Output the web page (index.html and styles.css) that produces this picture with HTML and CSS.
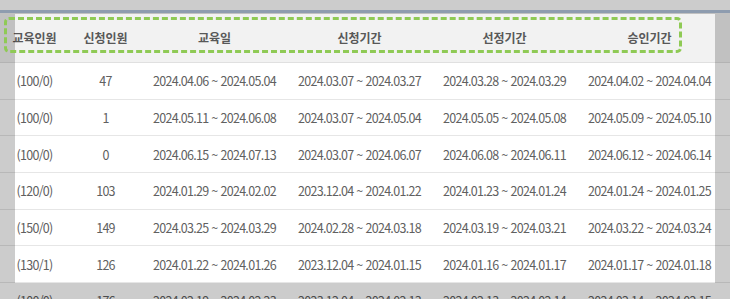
FILE: index.html
```html
<!DOCTYPE html>
<html lang="ko">
<head>
<meta charset="utf-8">
<link rel="stylesheet" href="styles.css">
</head>
<body>
<div class="page">
  <div class="topbar"></div>
  <table class="grid">
    <colgroup>
      <col class="c1"><col class="c2"><col class="c3"><col class="c4"><col class="c5"><col class="c6"><col>
    </colgroup>
    <thead>
      <tr><th>교육인원</th><th>신청인원</th><th>교육일</th><th>신청기간</th><th>선정기간</th><th>승인기간</th><th></th></tr>
    </thead>
    <tbody>
      <tr><td>(100/0)</td><td>47</td><td>2024.04.06 ~ 2024.05.04</td><td>2024.03.07 ~ 2024.03.27</td><td>2024.03.28 ~ 2024.03.29</td><td>2024.04.02 ~ 2024.04.04</td><td></td></tr>
      <tr><td>(100/0)</td><td>1</td><td>2024.05.11 ~ 2024.06.08</td><td>2024.03.07 ~ 2024.05.04</td><td>2024.05.05 ~ 2024.05.08</td><td>2024.05.09 ~ 2024.05.10</td><td></td></tr>
      <tr><td>(100/0)</td><td>0</td><td>2024.06.15 ~ 2024.07.13</td><td>2024.03.07 ~ 2024.06.07</td><td>2024.06.08 ~ 2024.06.11</td><td>2024.06.12 ~ 2024.06.14</td><td></td></tr>
      <tr><td>(120/0)</td><td>103</td><td>2024.01.29 ~ 2024.02.02</td><td>2023.12.04 ~ 2024.01.22</td><td>2024.01.23 ~ 2024.01.24</td><td>2024.01.24 ~ 2024.01.25</td><td></td></tr>
      <tr><td>(150/0)</td><td>149</td><td>2024.03.25 ~ 2024.03.29</td><td>2024.02.28 ~ 2024.03.18</td><td>2024.03.19 ~ 2024.03.21</td><td>2024.03.22 ~ 2024.03.24</td><td></td></tr>
      <tr><td>(130/1)</td><td>126</td><td>2024.01.22 ~ 2024.01.26</td><td>2023.12.04 ~ 2024.01.15</td><td>2024.01.16 ~ 2024.01.17</td><td>2024.01.17 ~ 2024.01.18</td><td></td></tr>
      <tr><td>(100/0)</td><td>176</td><td>2024.02.19 ~ 2024.02.23</td><td>2023.12.04 ~ 2024.02.13</td><td>2024.02.13 ~ 2024.02.14</td><td>2024.02.14 ~ 2024.02.15</td><td></td></tr>
    </tbody>
  </table>
  <div class="spotlight"></div>
  <div class="focus-ring"></div>
</div>
</body>
</html>
```

FILE: styles.css
```css
html, body {
  margin: 0;
  padding: 0;
  background: #ffffff;
}

.page {
  position: relative;
  width: 730px;
  height: 299px;
  overflow: hidden;
  font-family: "Noto Sans CJK KR", "Noto Sans", sans-serif;
}

.topbar {
  height: 10px;
  background: #ffffff;
  border-bottom: 3px solid #b2c4db;
}

.grid {
  width: 730px;
  table-layout: fixed;
  border-collapse: collapse;
  font-size: 12px;
  color: #606060;
}

.c1 { width: 69px; }
.c2 { width: 73px; }
.c3 { width: 145px; }
.c4 { width: 145px; }
.c5 { width: 145px; }
.c6 { width: 145px; }

.grid th {
  height: 49px;
  padding: 0;
  background: #f2f2f2;
  font-weight: 700;
  color: #585858;
  text-align: center;
  border-bottom: 1px solid #e0e0e0;
  white-space: nowrap;
}

.grid td {
  height: 35.67px;
  padding: 0;
  font-size: 12.5px;
  text-align: center;
  letter-spacing: -0.7px;
  border-bottom: 1px solid #e6e6e6;
  white-space: nowrap;
}

.spotlight {
  position: absolute;
  left: 15px;
  top: 14px;
  width: 700px;
  height: 269px;
  box-shadow: 0 0 0 2000px rgba(0, 0, 0, 0.2);
  pointer-events: none;
}

.focus-ring {
  position: absolute;
  left: 4px;
  top: 17px;
  width: 672px;
  height: 30px;
  border: 3px dashed #8fca55;
  border-radius: 5px;
  pointer-events: none;
}
```
